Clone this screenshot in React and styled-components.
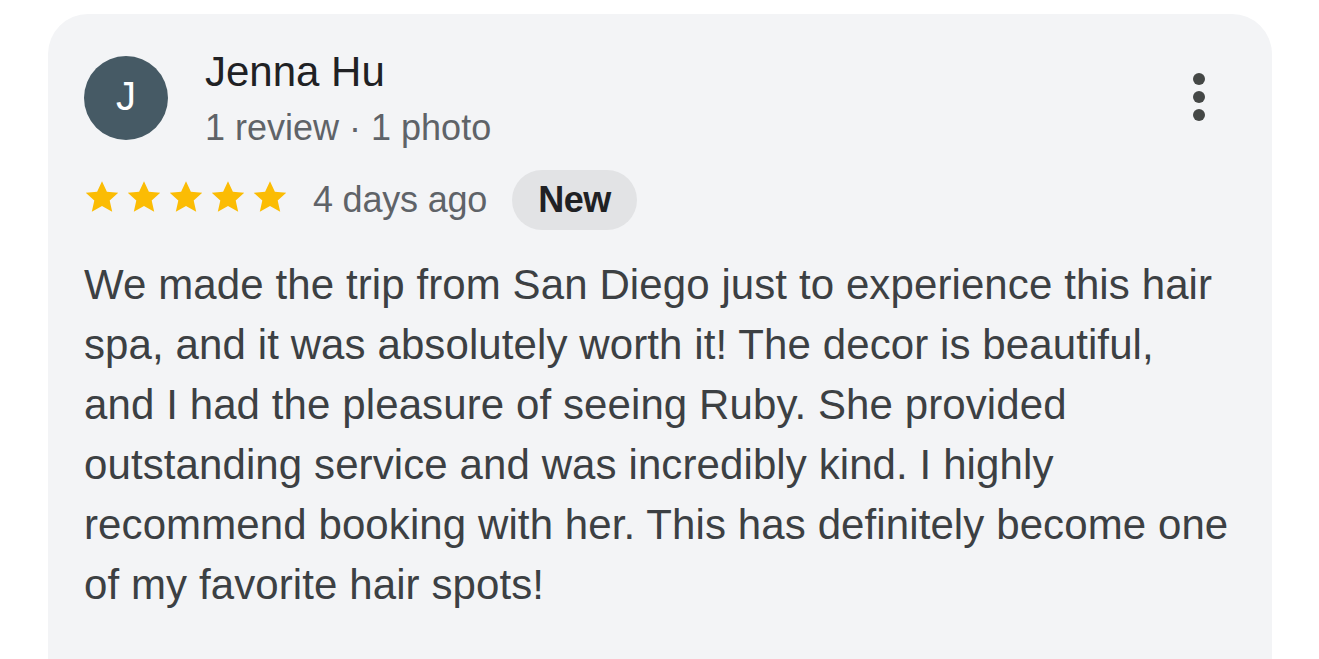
import React from "react";
import styled, { createGlobalStyle } from "styled-components";

const Global = createGlobalStyle`
  html, body { margin: 0; padding: 0; background: #ffffff; }
  body { font-family: "Liberation Sans", Arial, sans-serif; overflow: hidden; }
`;

const Page = styled.div`
  padding: 14px 0 0 48px;
  width: 1319px;
  height: 659px;
  box-sizing: border-box;
`;

const Card = styled.article`
  width: 1224px;
  min-height: 660px;
  box-sizing: border-box;
  background: #f3f4f6;
  border-radius: 40px 40px 0 0;
  padding: 33px 20px 0 36px;
  display: flex;
  flex-direction: column;
`;

const Header = styled.header`
  display: flex;
  align-items: flex-start;
`;

const Avatar = styled.div`
  width: 84px;
  height: 84px;
  border-radius: 50%;
  background: #465a65;
  color: #ffffff;
  display: flex;
  align-items: center;
  justify-content: center;
  font-size: 40px;
  margin-top: 9px;
  padding-bottom: 4px;
  box-sizing: border-box;
  flex: none;
`;

const Who = styled.div`
  display: flex;
  flex-direction: column;
  margin-left: 37px;
`;

const Name = styled.div`
  font-size: 42px;
  line-height: 50px;
  color: #202124;
`;

const Meta = styled.div`
  font-size: 36px;
  line-height: 44px;
  margin-top: 9px;
  color: #5f6368;
`;

const MenuButton = styled.button`
  margin-left: auto;
  margin-right: 14px;
  margin-top: 25px;
  width: 78px;
  height: 50px;
  border: 0;
  padding: 0;
  background: transparent;
  display: flex;
  align-items: center;
  justify-content: center;
`;

const RatingRow = styled.div`
  display: flex;
  align-items: center;
  gap: 25px;
  margin-top: 20px;
  height: 60px;
`;

const Stars = styled.div`
  display: flex;
  gap: 6px;
  margin-top: -6px;
`;

const When = styled.span`
  font-size: 36px;
  color: #5f6368;
  letter-spacing: -0.2px;
`;

const Badge = styled.span`
  height: 60px;
  padding: 0 26px;
  border-radius: 30px;
  background: #e2e3e5;
  color: #202124;
  font-size: 36px;
  font-weight: 700;
  display: inline-flex;
  align-items: center;
  letter-spacing: -0.5px;
`;

const Body = styled.p`
  margin: 25px 0 0;
  font-size: 42px;
  line-height: 60px;
  color: #3c4043;
  letter-spacing: 0.1px;
`;

const Star = () => (
  <svg width="36" height="34" viewBox="0 0 24 23">
    <path
      d="M12 0.8l3.3 7.1 7.7 0.8-5.8 5.2 1.7 7.6L12 17.6l-6.9 3.9 1.7-7.6L1 8.7l7.7-0.8z"
      fill="#fbbc04"
    />
  </svg>
);

const Dots = () => (
  <svg width="14" height="48" viewBox="0 0 14 48">
    <circle cx="7" cy="6" r="6" fill="#444746" />
    <circle cx="7" cy="24" r="6" fill="#444746" />
    <circle cx="7" cy="42" r="6" fill="#444746" />
  </svg>
);

export default function App() {
  return (
    <>
      <Global />
      <Page>
        <Card>
          <Header>
            <Avatar>J</Avatar>
            <Who>
              <Name>Jenna Hu</Name>
              <Meta>1 review · 1 photo</Meta>
            </Who>
            <MenuButton aria-label="More options">
              <Dots />
            </MenuButton>
          </Header>
          <RatingRow>
            <Stars>
              {[0, 1, 2, 3, 4].map((i) => (
                <Star key={i} />
              ))}
            </Stars>
            <When>4 days ago</When>
            <Badge>New</Badge>
          </RatingRow>
          <Body>
            We made the trip from San Diego just to experience this hair
            <br />
            spa, and it was absolutely worth it! The decor is beautiful,
            <br />
            and I had the pleasure of seeing Ruby. She provided
            <br />
            outstanding service and was incredibly kind. I highly
            <br />
            recommend booking with her. This has definitely become one
            <br />
            of my favorite hair spots!
          </Body>
        </Card>
      </Page>
    </>
  );
}
